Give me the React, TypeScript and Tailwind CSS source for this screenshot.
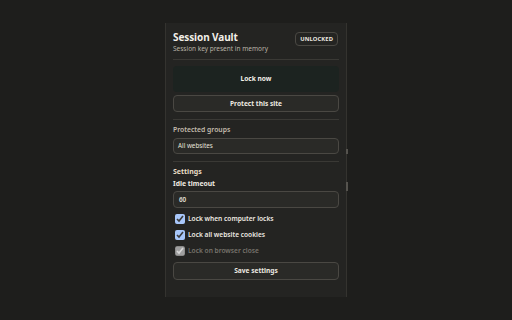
import { useState } from 'react'

const font = { fontFamily: '"Noto Sans", "Open Sans", sans-serif' }

const Divider = () => <div className="h-px bg-[#3a3935]" />

const Check = ({
  label,
  checked,
  disabled,
}: {
  label: string
  checked: boolean
  disabled?: boolean
}) => {
  const [on, setOn] = useState(checked)
  return (
    <label className="flex items-center gap-[3px] h-[16px] pl-[2px]">
      <input
        type="checkbox"
        checked={on}
        disabled={disabled}
        onChange={() => setOn(!on)}
        className="w-[10px] h-[10px] m-0 accent-[#a8c7fa]"
      />
      <span
        className={
          disabled
            ? 'text-[6.6px] font-semibold text-[#77736c]'
            : 'text-[6.6px] font-semibold text-[#eeeae2]'
        }
      >
        {label}
      </span>
    </label>
  )
}

export default function App() {
  return (
    <div
      className="w-[512px] h-[320px] bg-[#1e1e1c] flex justify-center items-center"
      style={font}
    >
      <div className="relative w-[182px] h-[274px] bg-[#242422] border-x border-[#34332f] px-[7px] pt-[8px] flex flex-col">
        {/* header */}
        <div className="flex justify-between items-start h-[28px]">
          <div className="flex flex-col">
            <div className="text-[10px] leading-[13px] font-bold text-[#f2efe8] tracking-[-0.1px]">
              Session Vault
            </div>
            <div className="text-[6.5px] leading-[9px] text-[#b8b2a6]">
              Session key present in memory
            </div>
          </div>
          <div className="mt-[1px] mr-[1px] h-[14px] px-[4px] flex items-center rounded-[4px] border border-[#4a4843] text-[5.8px] font-bold text-[#ece8e0] tracking-[0.1px]">
            UNLOCKED
          </div>
        </div>

        <Divider />

        <div className="flex flex-col gap-[3px] mt-[6px]">
          <button className="h-[26px] rounded-[4px] bg-[#1c2320] text-[6.6px] font-bold text-[#f4f1ea]">
            Lock now
          </button>
          <button className="h-[17px] rounded-[4px] border border-[#4a4843] bg-[#2a2a27] text-[6.6px] font-bold text-[#ece8e0]">
            Protect this site
          </button>
        </div>

        <div className="mt-[7px]">
          <Divider />
        </div>

        <div className="mt-[5px] text-[6.8px] leading-[10px] font-semibold text-[#c3bbac]">
          Protected groups
        </div>
        <div className="mt-[3px] h-[16px] rounded-[4px] border border-[#4a4843] bg-[#2a2a27] flex items-center px-[4px] text-[6.3px] text-[#e6e2da]">
          All websites
        </div>

        <div className="mt-[7px]">
          <Divider />
        </div>

        <div className="mt-[5px] text-[7px] leading-[10px] font-bold text-[#e8dcc6]">
          Settings
        </div>
        <div className="mt-[2px] text-[6.8px] leading-[10px] font-bold text-[#eeeae2]">
          Idle timeout
        </div>
        <div className="mt-[2px] h-[17px] rounded-[4px] border border-[#4a4843] bg-[#2a2a27] flex items-center px-[5px] text-[6.3px] font-semibold text-[#e6e2da]">
          60
        </div>

        <div className="mt-[3px] flex flex-col">
          <Check label="Lock when computer locks" checked />
          <Check label="Lock all website cookies" checked />
          <Check label="Lock on browser close" checked disabled />
        </div>

        <button className="mt-[3px] h-[18px] rounded-[4px] border border-[#4a4843] bg-[#2a2a27] text-[6.6px] font-bold text-[#ece8e0]">
          Save settings
        </button>

        {/* scrollbar bits */}
        <div className="absolute right-[-2px] top-[126px] w-[2px] h-[5px] bg-[#55534e]" />
        <div className="absolute right-[-2px] top-[159px] w-[2px] h-[9px] bg-[#55534e]" />
      </div>
    </div>
  )
}
